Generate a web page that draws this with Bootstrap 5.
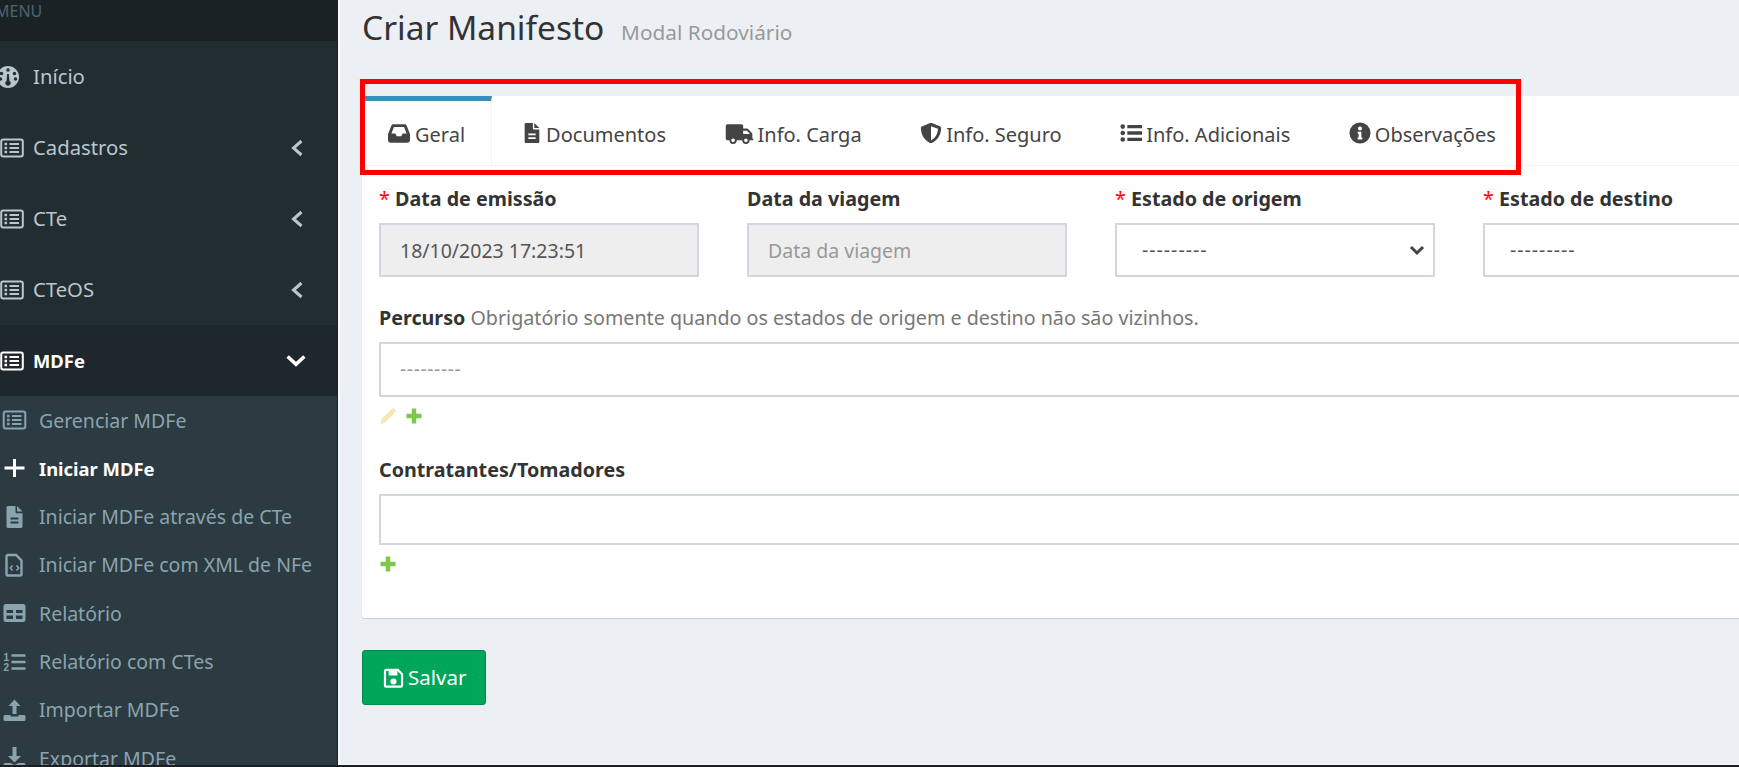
<!DOCTYPE html>
<html lang="pt-BR">
<head>
<meta charset="UTF-8">
<title>Criar Manifesto</title>
<link href="https://cdn.jsdelivr.net/npm/bootstrap@5.3.0/dist/css/bootstrap.min.css" rel="stylesheet">
<style>
    html, body { height: 767px; overflow: hidden; }
    body { font-family: "Noto Sans", "Liberation Sans", sans-serif; font-size: 19.7px; background: #ecf0f5; color: #333; }
    .page-wrap { display: flex; width: 1739px; height: 767px; overflow: hidden; border-bottom: 2px solid #1c1f22; }

    .side-bar { flex: 0 0 338px; background: #222d32; overflow: hidden; color: #b8c7ce; font-size: 19.5px; border-right: 1px solid #1a2226; }
    .side-head { height: 41px; background: #1a2226; color: #4b646f; font-size: 16px; line-height: 22px; margin-left: -5px; padding-left: 0; }
    .side-head-bg { background: #1a2226; }
    .side-item { display: flex; align-items: center; height: 71px; color: #b8c7ce; font-size: 20.3px; text-decoration: none; padding-right: 33px; }
    .side-item.open { background: #1e282c; color: #fff; font-weight: 700; font-size: 18.4px; }
    .side-item .ico-main { width: 24px; height: 24px; margin-right: 9px; flex: none; margin-left: 0; }
    .side-item .ico-arrow { width: 14px; height: 18px; margin-left: auto; flex: none; }
    .side-sub { background: #2c3b41; padding-top: 0; }
    .side-subitem { display: flex; align-items: center; height: 48.3px; color: #8aa4af; text-decoration: none; padding-left: 2px; }
    .side-subitem.on { color: #fff; font-weight: 700; font-size: 18.4px; }
    .side-subitem svg { width: 25px; height: 24px; margin-right: 12px; flex: none; }

    .main-area { flex: 1 1 auto; min-width: 0; padding-left: 22px; border-left: 2px solid #f8f9fb; border-bottom: 1px solid #f8f9fb; }
    .page-title { height: 96px; margin: 0; padding-top: 5px; font-size: 33.5px; font-weight: 400; line-height: 44px; color: #333; }
    .page-title small { font-size: 20.8px; color: #999; font-weight: 400; padding-left: 8px; }

    .form-box { position: relative; width: 1458px; background: #fff; border: 0; border-radius: 3px; box-shadow: 0 1px 1px rgba(0,0,0,.15); height: 522px; }
    .form-box .nav-tabs { height: 70px; border-bottom: 1px solid #f4f4f4; }
    .form-box .nav-link { display: flex; align-items: center; height: 69px; border: 0; border-top: 5px solid transparent; border-radius: 0; margin: 0 6.5px 0 0; padding: 3px 26px 0 26px; color: #444; font-size: 20px; gap: 5px; }
    .form-box .nav-link.active { border-top-color: #3c8dbc; border-right: 1px solid #f4f4f4; color: #444; background: #fff; margin-right: 3px; }
    .form-box .nav-link svg { width: 22px; height: 22px; flex: none; fill: #444; color: #444; margin-top: -3px; }
    .form-box .nav-link svg.wide-ico { width: 29px; }

    .form-body { padding: 20px 17px 0; }
    .form-body .row { --bs-gutter-x: 48px; }
    .field-label { display: block; font-weight: 700; margin-bottom: 11px; line-height: 26px; color: #333; }
    .field-label .req { color: #f00; font-weight: 400; }
    .field-label .hint { font-weight: 400; color: #777; }
    .form-body .form-control, .form-body .form-select { height: 54px; border: 2px solid #d2d6de; border-radius: 0; font-size: 19.5px; color: #555; padding: 0 19px; box-shadow: none; }
    .form-body .form-control[readonly] { background: #eee; border-color: #d2d6de; }
    .form-body .form-control::placeholder { color: #999; }
    .form-body .form-select { padding-left: 25px; letter-spacing: 1px; background-position: right 8px center; background-size: 16px 16px; background-image: url("data:image/svg+xml,%3csvg xmlns='http://www.w3.org/2000/svg' viewBox='0 0 16 16'%3e%3cpath fill='none' stroke='%23444' stroke-width='3' d='M2 5l6 6 6-6'/%3e%3c/svg%3e"); }
    .multi-box { height: 55px; border: 2px solid #d2d6de; padding: 0 19px; display: flex; align-items: center; color: #999; font-size: 19px; letter-spacing: .7px; }
    .multi-box.short { height: 51px; }
    .icon-row { display: flex; align-items: center; gap: 8px; height: 36px; margin-top: 1px; }
    .icon-row svg { width: 18px; height: 18px; flex: none; }
    .field-block { margin-top: 28px; }
    .field-block + .field-block { margin-top: 23px; }

    .save-btn { display: inline-flex; align-items: center; gap: 4px; width: 124px; height: 55px; margin-top: 32px; padding: 0 20px; font-size: 20.5px; border-radius: 3px; background: #00a65a; border: 1px solid #008d4c; color: #fff; }
    .save-btn svg { width: 21px; height: 22px; flex: none; }

    .red-frame { position: absolute; left: -2px; top: -17px; width: 1161px; height: 96px; border: 5px solid #f00; pointer-events: none; }
</style>
</head>
<body>
<svg width="0" height="0" class="d-block" aria-hidden="true">
    <symbol id="i-listalt" viewBox="0 0 24 24">
        <rect x="1.2" y="3.5" width="21.6" height="17" rx="2" fill="none" stroke="currentColor" stroke-width="2"/>
        <path d="M9.5 8H19M9.5 12H19M9.5 16H19" stroke="currentColor" stroke-width="2.2" fill="none"/>
        <path d="M4.5 6.8h2.6v2.400H4.500zM4.500 10.800h2.600v2.400H4.500zM4.500 14.800h2.600v2.400H4.500z" fill="currentColor"/>
    </symbol>
    <symbol id="i-filealt" viewBox="0 0 24 24">
        <path fill="currentColor" fill-rule="evenodd" d="M4 2.500c0-.8.600-1.500 1.500-1.500H13v6c0 .800.600 1.300 1.300 1.300H20v13.200c0 .800-.700 1.500-1.500 1.500h-13C4.700 23 4 22.300 4 21.500zM8 12.500h8v2H8zM8 16.500h8v2H8zM14.500 1 20 6.500h-5.500z"/>
    </symbol>
</svg>

<div class="page-wrap">
    <aside class="side-bar">
        <div class="side-head-bg"><div class="side-head">MENU</div></div>
        <a class="side-item" href="#">
            <svg class="ico-main" viewBox="0 0 24 24" style="margin-left:-4px;margin-right:13px">
                <circle cx="12" cy="12" r="11" fill="currentColor"/>
                <circle cx="12" cy="5" r="1.700" fill="#222d32"/>
                <circle cx="5.500" cy="8.500" r="1.700" fill="#222d32"/>
                <circle cx="18.500" cy="8.500" r="1.700" fill="#222d32"/>
                <circle cx="4.500" cy="14" r="1.700" fill="#222d32"/>
                <circle cx="19.500" cy="14" r="1.700" fill="#222d32"/>
                <path d="M11.200 9h1.600l.700 7a2.600 2.600 0 1 1-3 0z" fill="#222d32"/>
            </svg>
            Início
        </a>
        <a class="side-item" href="#">
            <svg class="ico-main"><use href="#i-listalt"/></svg>Cadastros
            <svg class="ico-arrow" viewBox="0 0 14 18"><path d="M11.500 2 3.500 9l8 7" fill="none" stroke="currentColor" stroke-width="3"/></svg>
        </a>
        <a class="side-item" href="#">
            <svg class="ico-main"><use href="#i-listalt"/></svg>CTe
            <svg class="ico-arrow" viewBox="0 0 14 18"><path d="M11.500 2 3.500 9l8 7" fill="none" stroke="currentColor" stroke-width="3"/></svg>
        </a>
        <a class="side-item" href="#">
            <svg class="ico-main"><use href="#i-listalt"/></svg>CTeOS
            <svg class="ico-arrow" viewBox="0 0 14 18"><path d="M11.500 2 3.500 9l8 7" fill="none" stroke="currentColor" stroke-width="3"/></svg>
        </a>
        <a class="side-item open" href="#">
            <svg class="ico-main"><use href="#i-listalt"/></svg>MDFe
            <svg class="ico-arrow" viewBox="0 0 18 18" style="width:20px;height:20px;margin-right:-2px"><path d="M1.500 5 9 12l7.500-7" fill="none" stroke="currentColor" stroke-width="3.200"/></svg>
        </a>
        <div class="side-sub">
            <a class="side-subitem" href="#"><svg><use href="#i-listalt"/></svg>Gerenciar MDFe</a>
            <a class="side-subitem on" href="#">
                <svg viewBox="0 0 24 24"><path d="M12 3v18M2 12h20" stroke="currentColor" stroke-width="3" fill="none"/></svg>Iniciar MDFe
            </a>
            <a class="side-subitem" href="#"><svg><use href="#i-filealt"/></svg>Iniciar MDFe através de CTe</a>
            <a class="side-subitem" href="#">
                <svg viewBox="0 0 24 24">
                    <path d="M5.500 2h8l5.500 5.500V21a1.500 1.500 0 0 1-1.500 1.500h-12A1.500 1.500 0 0 1 4 21V3.500A1.500 1.500 0 0 1 5.500 2z" fill="none" stroke="currentColor" stroke-width="2.400"/>
                    <path d="M10 12.500 7.800 15l2.200 2.500M14 12.500l2.200 2.500-2.200 2.500" fill="none" stroke="currentColor" stroke-width="1.500"/>
                </svg>Iniciar MDFe com XML de NFe
            </a>
            <a class="side-subitem" href="#">
                <svg viewBox="0 0 24 24"><path fill="currentColor" fill-rule="evenodd" d="M3.500 3h17A2.500 2.500 0 0 1 23 5.500v13a2.500 2.500 0 0 1-2.500 2.500h-17A2.500 2.500 0 0 1 1 18.500v-13A2.500 2.500 0 0 1 3.500 3zM4 9v3h6.500V9zM13.500 9v3H20V9zM4 14.500V18h6.500v-3.500zM13.500 14.500V18H20v-3.500z"/></svg>Relatório
            </a>
            <a class="side-subitem" href="#">
                <svg viewBox="0 0 24 24">
                    <text x="1" y="11" font-size="10" font-weight="700" fill="currentColor" font-family="Liberation Sans, sans-serif">1</text>
                    <text x="1" y="21" font-size="10" font-weight="700" fill="currentColor" font-family="Liberation Sans, sans-serif">2</text>
                    <path d="M9 5.500h14M9 12h14M9 18.500h14" stroke="currentColor" stroke-width="2.600" fill="none"/>
                </svg>Relatório com CTes
            </a>
            <a class="side-subitem" href="#">
                <svg viewBox="0 0 24 24">
                    <path d="M12 1.500 18 8h-4v8h-4V8H6z" fill="currentColor"/>
                    <path d="M2.500 17H8v1.500h8V17h5.500A1.500 1.500 0 0 1 23 18.500v3a1.500 1.500 0 0 1-1.500 1.500h-19A1.500 1.500 0 0 1 1 21.500v-3A1.500 1.500 0 0 1 2.500 17z" fill="currentColor"/>
                </svg>Importar MDFe
            </a>
            <a class="side-subitem" href="#">
                <svg viewBox="0 0 24 24">
                    <path d="M10 1h4v9h4.500L12 16.500 5.500 10H10z" fill="currentColor"/>
                    <path d="M2.500 17H8l4 2 4-2h5.500A1.500 1.500 0 0 1 23 18.500v3a1.500 1.500 0 0 1-1.500 1.500h-19A1.500 1.500 0 0 1 1 21.500v-3A1.500 1.500 0 0 1 2.500 17z" fill="currentColor"/>
                </svg>Exportar MDFe
            </a>
        </div>
    </aside>

    <main class="main-area">
        <h1 class="page-title">Criar Manifesto <small>Modal Rodoviário</small></h1>

        <div class="form-box">
            <ul class="nav nav-tabs">
                <li class="nav-item">
                    <a class="nav-link active" href="#">
                        <svg viewBox="0 0 24 24"><path fill-rule="evenodd" d="M6 2.500h12c1 0 1.800.500 2.300 1.400L23.500 12c.300.500.500 1 .500 1.700V20a2.500 2.500 0 0 1-2.500 2.500h-19A2.500 2.500 0 0 1 0 20v-6.300c0-.600.200-1.200.500-1.700L3.700 3.900C4.200 3 5 2.500 6 2.500zM6.500 5.500 3.700 12.500H8l1.500 3h5l1.500-3h4.300l-2.800-7z"/></svg>
                        Geral
                    </a>
                </li>
                <li class="nav-item">
                    <a class="nav-link" href="#"><svg style="margin-right:-2px"><use href="#i-filealt"/></svg>Documentos</a>
                </li>
                <li class="nav-item">
                    <a class="nav-link" href="#">
                        <svg class="wide-ico" viewBox="0 0 30 24" style="margin-right:-1px"><path fill-rule="evenodd" d="M2 2.500h15c1 0 2 .800 2 2V7h4c.700 0 1.300.300 1.700.800l4 4.500c.300.400.300.700.300 1.200V18h1v2h-4a4 4 0 0 1-8 0h-6a4 4 0 0 1-8 0H2c-1 0-2-.800-2-2V4.500c0-1.200 1-2 2-2zM19 9.500V13h7.500l-3.300-3.500zM8 18a2 2 0 1 0 0 4 2 2 0 0 0 0-4zM22 18a2 2 0 1 0 0 4 2 2 0 0 0 0-4z"/></svg>
                        Info. Carga
                    </a>
                </li>
                <li class="nav-item">
                    <a class="nav-link" href="#">
                        <svg viewBox="0 0 24 24" style="margin-right:-1px"><path fill-rule="evenodd" d="M12 1c.300 0 .600.100.900.200l8.600 3.300c.900.300 1.500 1.100 1.500 2 0 8.300-4.700 13.700-10.100 16.300a2 2 0 0 1-1.800 0C5.700 20.200 1 14.800 1 6.500c0-.900.600-1.700 1.500-2l8.600-3.300c.3-.1.600-.2.900-.2zM12 4.500v15.600c4-2.100 7.400-6.200 7.600-12.700z"/></svg>
                        Info. Seguro
                    </a>
                </li>
                <li class="nav-item">
                    <a class="nav-link" href="#">
                        <svg viewBox="0 0 24 24" style="margin-right:-1px"><circle cx="3" cy="5" r="2.500"/><circle cx="3" cy="12" r="2.500"/><circle cx="3" cy="19" r="2.500"/><path d="M8 3.200h16v3.600H8zM8 10.200h16v3.600H8zM8 17.200h16v3.600H8z"/></svg>
                        Info. Adicionais
                    </a>
                </li>
                <li class="nav-item">
                    <a class="nav-link" href="#">
                        <svg viewBox="0 0 24 24" style="margin-right:-1px"><path fill-rule="evenodd" d="M12 .500a11.500 11.500 0 1 1 0 23 11.500 11.500 0 0 1 0-23zM12 4.800a2.200 2.200 0 1 0 0 4.400 2.200 2.200 0 0 0 0-4.400zM9.500 10.500v2.200h1v4h-1V19h5v-2.300h-1v-6.200z"/></svg>
                        Observações
                    </a>
                </li>
            </ul>

            <form class="form-body">
                <div class="row">
                    <div class="col-3">
                        <label class="field-label"><span class="req">*</span> Data de emissão</label>
                        <input class="form-control" type="text" value="18/10/2023 17:23:51" readonly>
                    </div>
                    <div class="col-3">
                        <label class="field-label">Data da viagem</label>
                        <input class="form-control" type="text" placeholder="Data da viagem" readonly>
                    </div>
                    <div class="col-3">
                        <label class="field-label"><span class="req">*</span> Estado de origem</label>
                        <select class="form-select"><option>---------</option></select>
                    </div>
                    <div class="col-3">
                        <label class="field-label"><span class="req">*</span> Estado de destino</label>
                        <select class="form-select"><option>---------</option></select>
                    </div>
                </div>

                <div class="field-block">
                    <label class="field-label">Percurso <span class="hint">Obrigatório somente quando os estados de origem e destino não são vizinhos.</span></label>
                    <div class="multi-box">---------</div>
                    <div class="icon-row">
                        <svg viewBox="0 0 24 24"><path d="M17 2.500a2.500 2.500 0 0 1 3.500 0l1 1a2.500 2.500 0 0 1 0 3.500L8 20.500 1.500 22.500 3.500 16z" fill="#fbe3b4"/></svg>
                        <svg viewBox="0 0 24 24"><path d="M9 2h6v7h7v6h-7v7H9v-7H2V9h7z" fill="#7fc64a"/></svg>
                    </div>
                </div>

                <div class="field-block">
                    <label class="field-label">Contratantes/Tomadores</label>
                    <div class="multi-box short"></div>
                    <div class="icon-row">
                        <svg viewBox="0 0 24 24"><path d="M9 2h6v7h7v6h-7v7H9v-7H2V9h7z" fill="#7fc64a"/></svg>
                    </div>
                </div>
            </form>

            <div class="red-frame"></div>
        </div>

        <button class="btn btn-success save-btn" type="button">
            <svg viewBox="0 0 24 24"><path fill="currentColor" fill-rule="evenodd" d="M4 1.500h13.500L23 7v13.500a2.500 2.500 0 0 1-2.500 2.500h-17A2.500 2.500 0 0 1 1 20.500v-16a3 3 0 0 1 3-3zM3.500 4v16.500h17V8L16.500 4v5h-10V4zM12 12.500a3.500 3.500 0 1 0 0 7 3.500 3.500 0 0 0 0-7z"/></svg>
            Salvar
        </button>
    </main>
</div>

<script src="https://cdn.jsdelivr.net/npm/bootstrap@5.3.0/dist/js/bootstrap.bundle.min.js"></script>
</body>
</html>
